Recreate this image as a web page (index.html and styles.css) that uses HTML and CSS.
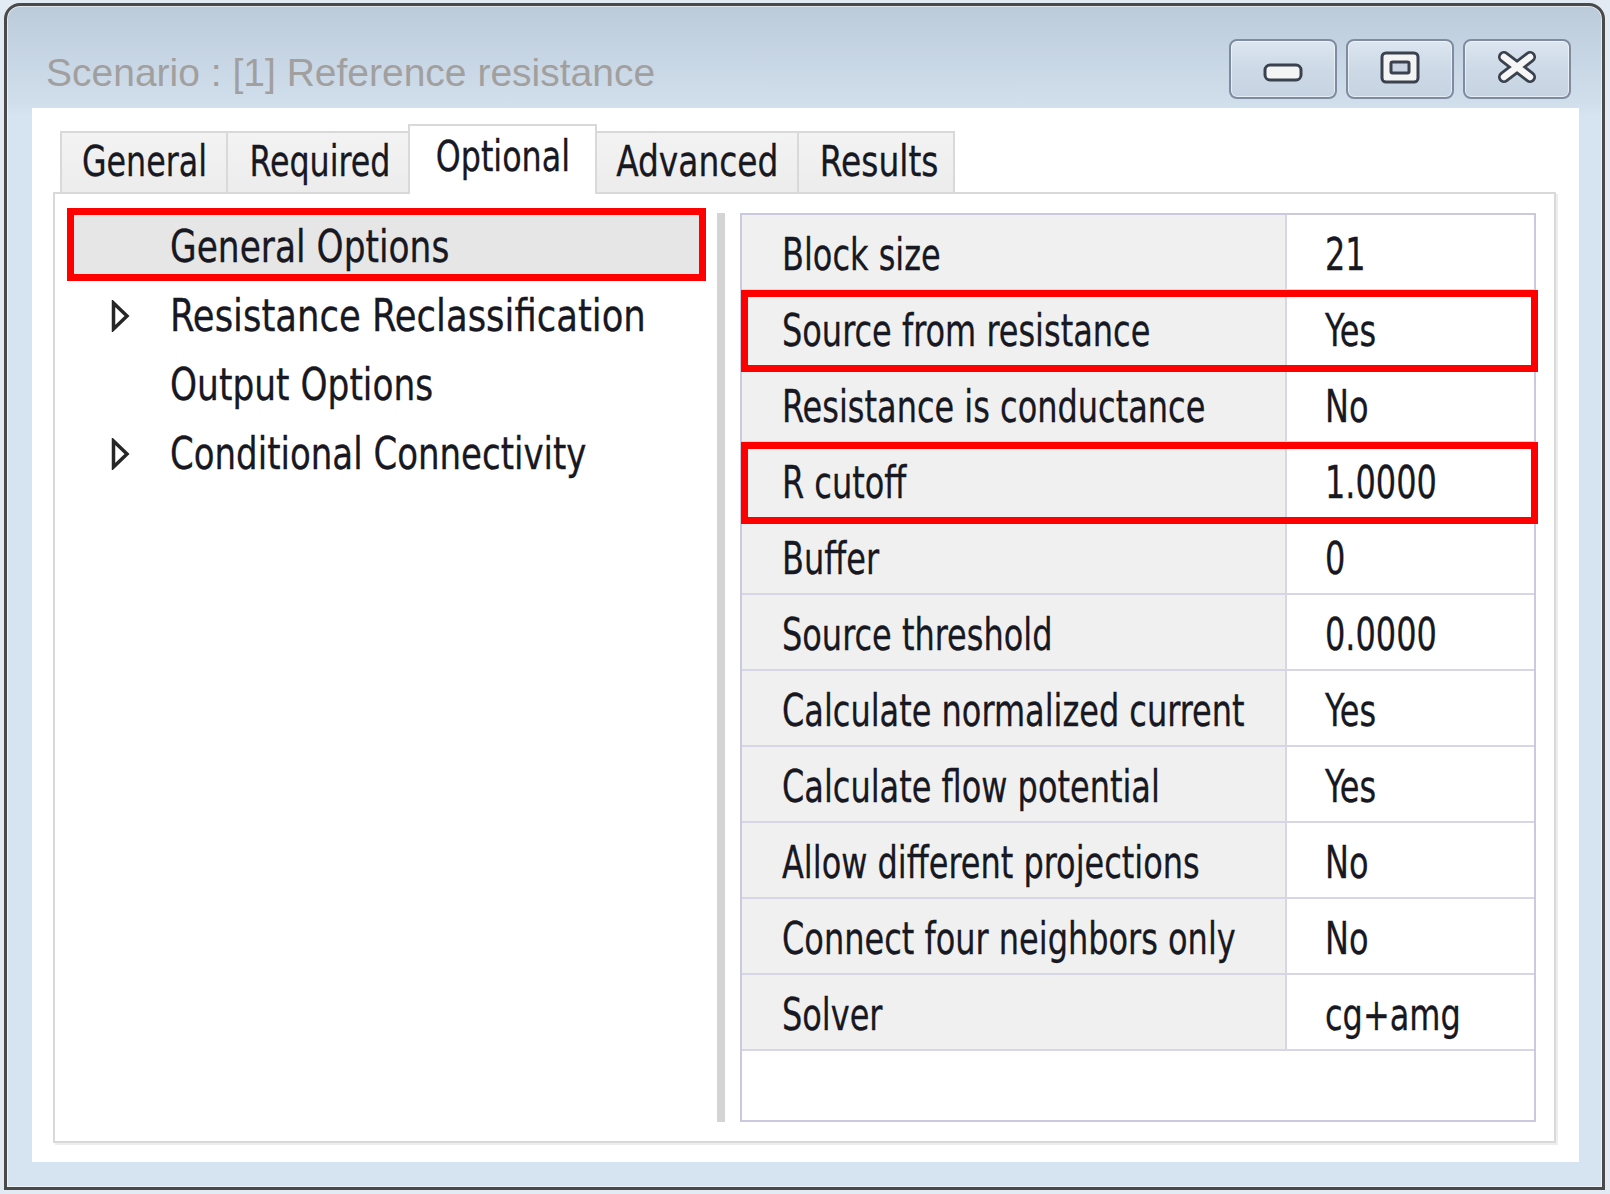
FILE: index.html
```html
<!DOCTYPE html>
<html lang="en">
<head>
<meta charset="utf-8">
<title>Scenario</title>
<link rel="stylesheet" href="styles.css">
</head>
<body>
<div class="window">
  <div class="titlebar">
    <div class="title">Scenario : [1] Reference resistance</div>
    <div class="caption-buttons">
      <div class="capbtn capbtn-min">
        <svg width="40" height="20" viewBox="0 0 40 20"><rect x="2" y="2" width="36" height="15" rx="5" fill="#f4f4f4" stroke="#3a4250" stroke-width="3"/></svg>
      </div>
      <div class="capbtn capbtn-max">
        <svg width="40" height="33" viewBox="0 0 40 33"><rect x="2" y="2" width="36" height="29" rx="4" fill="#f4f4f4" stroke="#3a4250" stroke-width="3"/><rect x="11" y="11" width="18" height="11" rx="1.5" fill="#c9d5e3" stroke="#3a4250" stroke-width="3"/></svg>
      </div>
      <div class="capbtn capbtn-close">
        <svg width="42" height="34" viewBox="0 0 42 34"><path d="M8 7 L34 27 M34 7 L8 27" stroke="#3a4250" stroke-width="12" stroke-linecap="round"/><path d="M8 7 L34 27 M34 7 L8 27" stroke="#f6f6f6" stroke-width="6.5" stroke-linecap="round"/></svg>
      </div>
    </div>
  </div>
  <div class="client">
    <div class="tabstrip">
      <div class="tab tab-general"><span class="t">General</span></div>
      <div class="tab tab-required"><span class="t">Required</span></div>
      <div class="tab tab-optional tab-selected"><span class="t">Optional</span></div>
      <div class="tab tab-advanced"><span class="t">Advanced</span></div>
      <div class="tab tab-results"><span class="t">Results</span></div>
    </div>
    <div class="tabpanel">
      <div class="tree">
        <div class="tree-row tree-row-selected"><span class="twisty"></span><span class="t">General Options</span></div>
        <div class="tree-row"><span class="twisty"><svg width="19" height="32" viewBox="0 0 19 32"><path d="M2.5 3 L16 16 L2.5 29 Z" fill="#fff" stroke="#262626" stroke-width="3.5"/></svg></span><span class="t t-wide">Resistance Reclassification</span></div>
        <div class="tree-row"><span class="twisty"></span><span class="t">Output Options</span></div>
        <div class="tree-row"><span class="twisty"><svg width="19" height="32" viewBox="0 0 19 32"><path d="M2.5 3 L16 16 L2.5 29 Z" fill="#fff" stroke="#262626" stroke-width="3.5"/></svg></span><span class="t t-narrow">Conditional Connectivity</span></div>
      </div>
      <div class="splitter"></div>
      <div class="grid">
        <div class="grid-row"><div class="cell-name"><span class="t">Block size</span></div><div class="cell-value"><span class="t">21</span></div></div>
        <div class="grid-row grid-row-hl"><div class="cell-name"><span class="t">Source from resistance</span></div><div class="cell-value"><span class="t">Yes</span></div></div>
        <div class="grid-row"><div class="cell-name"><span class="t">Resistance is conductance</span></div><div class="cell-value"><span class="t">No</span></div></div>
        <div class="grid-row grid-row-hl"><div class="cell-name"><span class="t">R cutoff</span></div><div class="cell-value"><span class="t">1.0000</span></div></div>
        <div class="grid-row"><div class="cell-name"><span class="t">Buffer</span></div><div class="cell-value"><span class="t">0</span></div></div>
        <div class="grid-row"><div class="cell-name"><span class="t">Source threshold</span></div><div class="cell-value"><span class="t">0.0000</span></div></div>
        <div class="grid-row"><div class="cell-name"><span class="t">Calculate normalized current</span></div><div class="cell-value"><span class="t">Yes</span></div></div>
        <div class="grid-row"><div class="cell-name"><span class="t">Calculate flow potential</span></div><div class="cell-value"><span class="t">Yes</span></div></div>
        <div class="grid-row"><div class="cell-name"><span class="t">Allow different projections</span></div><div class="cell-value"><span class="t">No</span></div></div>
        <div class="grid-row"><div class="cell-name"><span class="t">Connect four neighbors only</span></div><div class="cell-value"><span class="t">No</span></div></div>
        <div class="grid-row"><div class="cell-name"><span class="t">Solver</span></div><div class="cell-value"><span class="t">cg+amg</span></div></div>
      </div>
    </div>
  </div>
</div>
</body>
</html>
```

FILE: styles.css
```css
html, body {
  margin: 0;
  padding: 0;
}

body {
  background: #e2eaf3;
  width: 1610px;
  height: 1194px;
  overflow: hidden;
  font-family: "DejaVu Sans Condensed", "DejaVu Sans", sans-serif;
  color: #181822;
}

.t {
  display: inline-block;
  white-space: nowrap;
  transform-origin: 0 50%;
  -webkit-text-stroke: 0.3px #181822;
}

.window {
  width: 1601px;
  height: 1187px;
  margin: 3px 0 0 4px;
  box-sizing: border-box;
  border: 3px solid #4a4a4a;
  border-radius: 16px 16px 0 0;
  background: linear-gradient(to bottom, #bccbda 0px, #d0deec 95px, #d6e3f0 110px, #d6e3f0 100%);
  box-shadow: inset 0 0 0 1px rgba(255, 255, 255, 0.55);
  padding: 0 23px 25px 25px;
  display: flex;
  flex-direction: column;
}

.titlebar {
  height: 102px;
  flex: none;
  display: flex;
  justify-content: space-between;
  align-items: flex-start;
}

.title {
  margin-left: 14px;
  margin-top: 47px;
  font-family: "Liberation Sans", Arial, sans-serif;
  font-size: 39px;
  line-height: 1;
  color: #a29f9f;
  white-space: nowrap;
}

.caption-buttons {
  display: flex;
  gap: 9px;
  margin-top: 33px;
  margin-right: 8px;
}

.capbtn {
  width: 108px;
  height: 60px;
  box-sizing: border-box;
  border: 2px solid #7f8ba0;
  border-radius: 8px;
  background: linear-gradient(to bottom, #dce6f1 0%, #cdd9e6 50%, #c6d3e2 100%);
  box-shadow: inset 0 0 0 1px rgba(255, 255, 255, 0.55);
  display: flex;
  align-items: center;
  justify-content: center;
}

.capbtn svg {
  display: block;
}

.capbtn-min svg {
  margin-top: 7px;
}

.capbtn-max svg,
.capbtn-close svg {
  margin-top: -4px;
}

.client {
  flex: 1;
  background: #ffffff;
  box-sizing: border-box;
  padding: 16px 23px 19px 21px;
  display: flex;
  flex-direction: column;
  min-height: 0;
}

.tabstrip {
  height: 68px;
  flex: none;
  display: flex;
  align-items: flex-end;
  padding-left: 7px;
  position: relative;
  z-index: 2;
}

.tab {
  height: 61px;
  flex: none;
  box-sizing: border-box;
  padding-bottom: 1px;
  border: 2px solid #d9d9d9;
  border-bottom: 0;
  margin-right: -2px;
  background: linear-gradient(to bottom, #f3f3f3 0%, #ececec 100%);
  display: flex;
  align-items: center;
  justify-content: center;
  font-size: 42px;
  line-height: 1;
  white-space: nowrap;
  position: relative;
}

.tab .t {
  transform: scaleX(0.84);
  transform-origin: 50% 50%;
}

.tab-advanced .t,
.tab-results .t {
  transform: scaleX(0.87);
}

.tab-general { width: 168px; }
.tab-required { width: 188px; }
.tab-optional { width: 189px; }
.tab-advanced { width: 204px; }
.tab-results { width: 158px; }

.tab-results {
  padding-left: 6px;
}

.tab-selected {
  height: 70px;
  margin: 0 -2px -2px -4px;
  padding-bottom: 7px;
  background: #ffffff;
  z-index: 3;
}

.tabpanel {
  flex: 1;
  min-height: 0;
  box-sizing: border-box;
  border: 2px solid #d9d9d9;
  box-shadow: 2px 2px 0 #eeeeee;
  background: #ffffff;
  padding: 19px 18px 19px 12px;
  display: flex;
  align-items: stretch;
}

.tree {
  width: 650px;
  flex: none;
  margin-top: -1px;
  align-self: flex-start;
}

.tree-row {
  width: 639px;
  height: 69px;
  display: flex;
  align-items: center;
  position: relative;
  font-size: 45px;
  line-height: 1;
  white-space: nowrap;
}

.tree-row .t {
  transform: scaleX(0.85);
  position: relative;
  z-index: 1;
}

.tree-row .t-wide {
  transform: scaleX(0.875);
}

.tree-row .t-narrow {
  transform: scaleX(0.84);
}

.twisty {
  flex: none;
  width: 44px;
  padding-left: 44px;
  margin-right: 15px;
  display: flex;
  align-items: center;
  height: 32px;
}

.twisty svg {
  display: block;
}

.tree-row-selected {
  background: #e6e6e6;
}

.tree-row-selected::after {
  content: "";
  position: absolute;
  top: -4px;
  left: 0;
  right: 0;
  bottom: 0;
  border: 7px solid #ff0000;
}

.splitter {
  width: 8px;
  flex: none;
  background: #d4d4d4;
  margin-right: 15px;
}

.grid {
  flex: 1;
  box-sizing: border-box;
  border: 2px solid #cacade;
  background: #ffffff;
  display: flex;
  flex-direction: column;
}

.grid-row {
  height: 76px;
  flex: none;
  box-sizing: border-box;
  border-bottom: 2px solid #d6d6e6;
  display: flex;
  position: relative;
  font-size: 45px;
  line-height: 1;
  white-space: nowrap;
}

.grid-row .t {
  transform: scaleX(0.79);
}

.cell-name {
  width: 503px;
  flex: none;
  background: #f0f0f0;
  border-right: 2px solid #d6d6e6;
  padding-left: 40px;
  padding-top: 5px;
  display: flex;
  align-items: center;
  overflow: visible;
}

.cell-value {
  flex: 1;
  padding-left: 38px;
  padding-top: 5px;
  display: flex;
  align-items: center;
}

.grid-row-hl::after {
  content: "";
  position: absolute;
  top: -1px;
  left: -1px;
  right: -4px;
  bottom: -7px;
  border: 7px solid #ff0000;
  z-index: 2;
}
```
